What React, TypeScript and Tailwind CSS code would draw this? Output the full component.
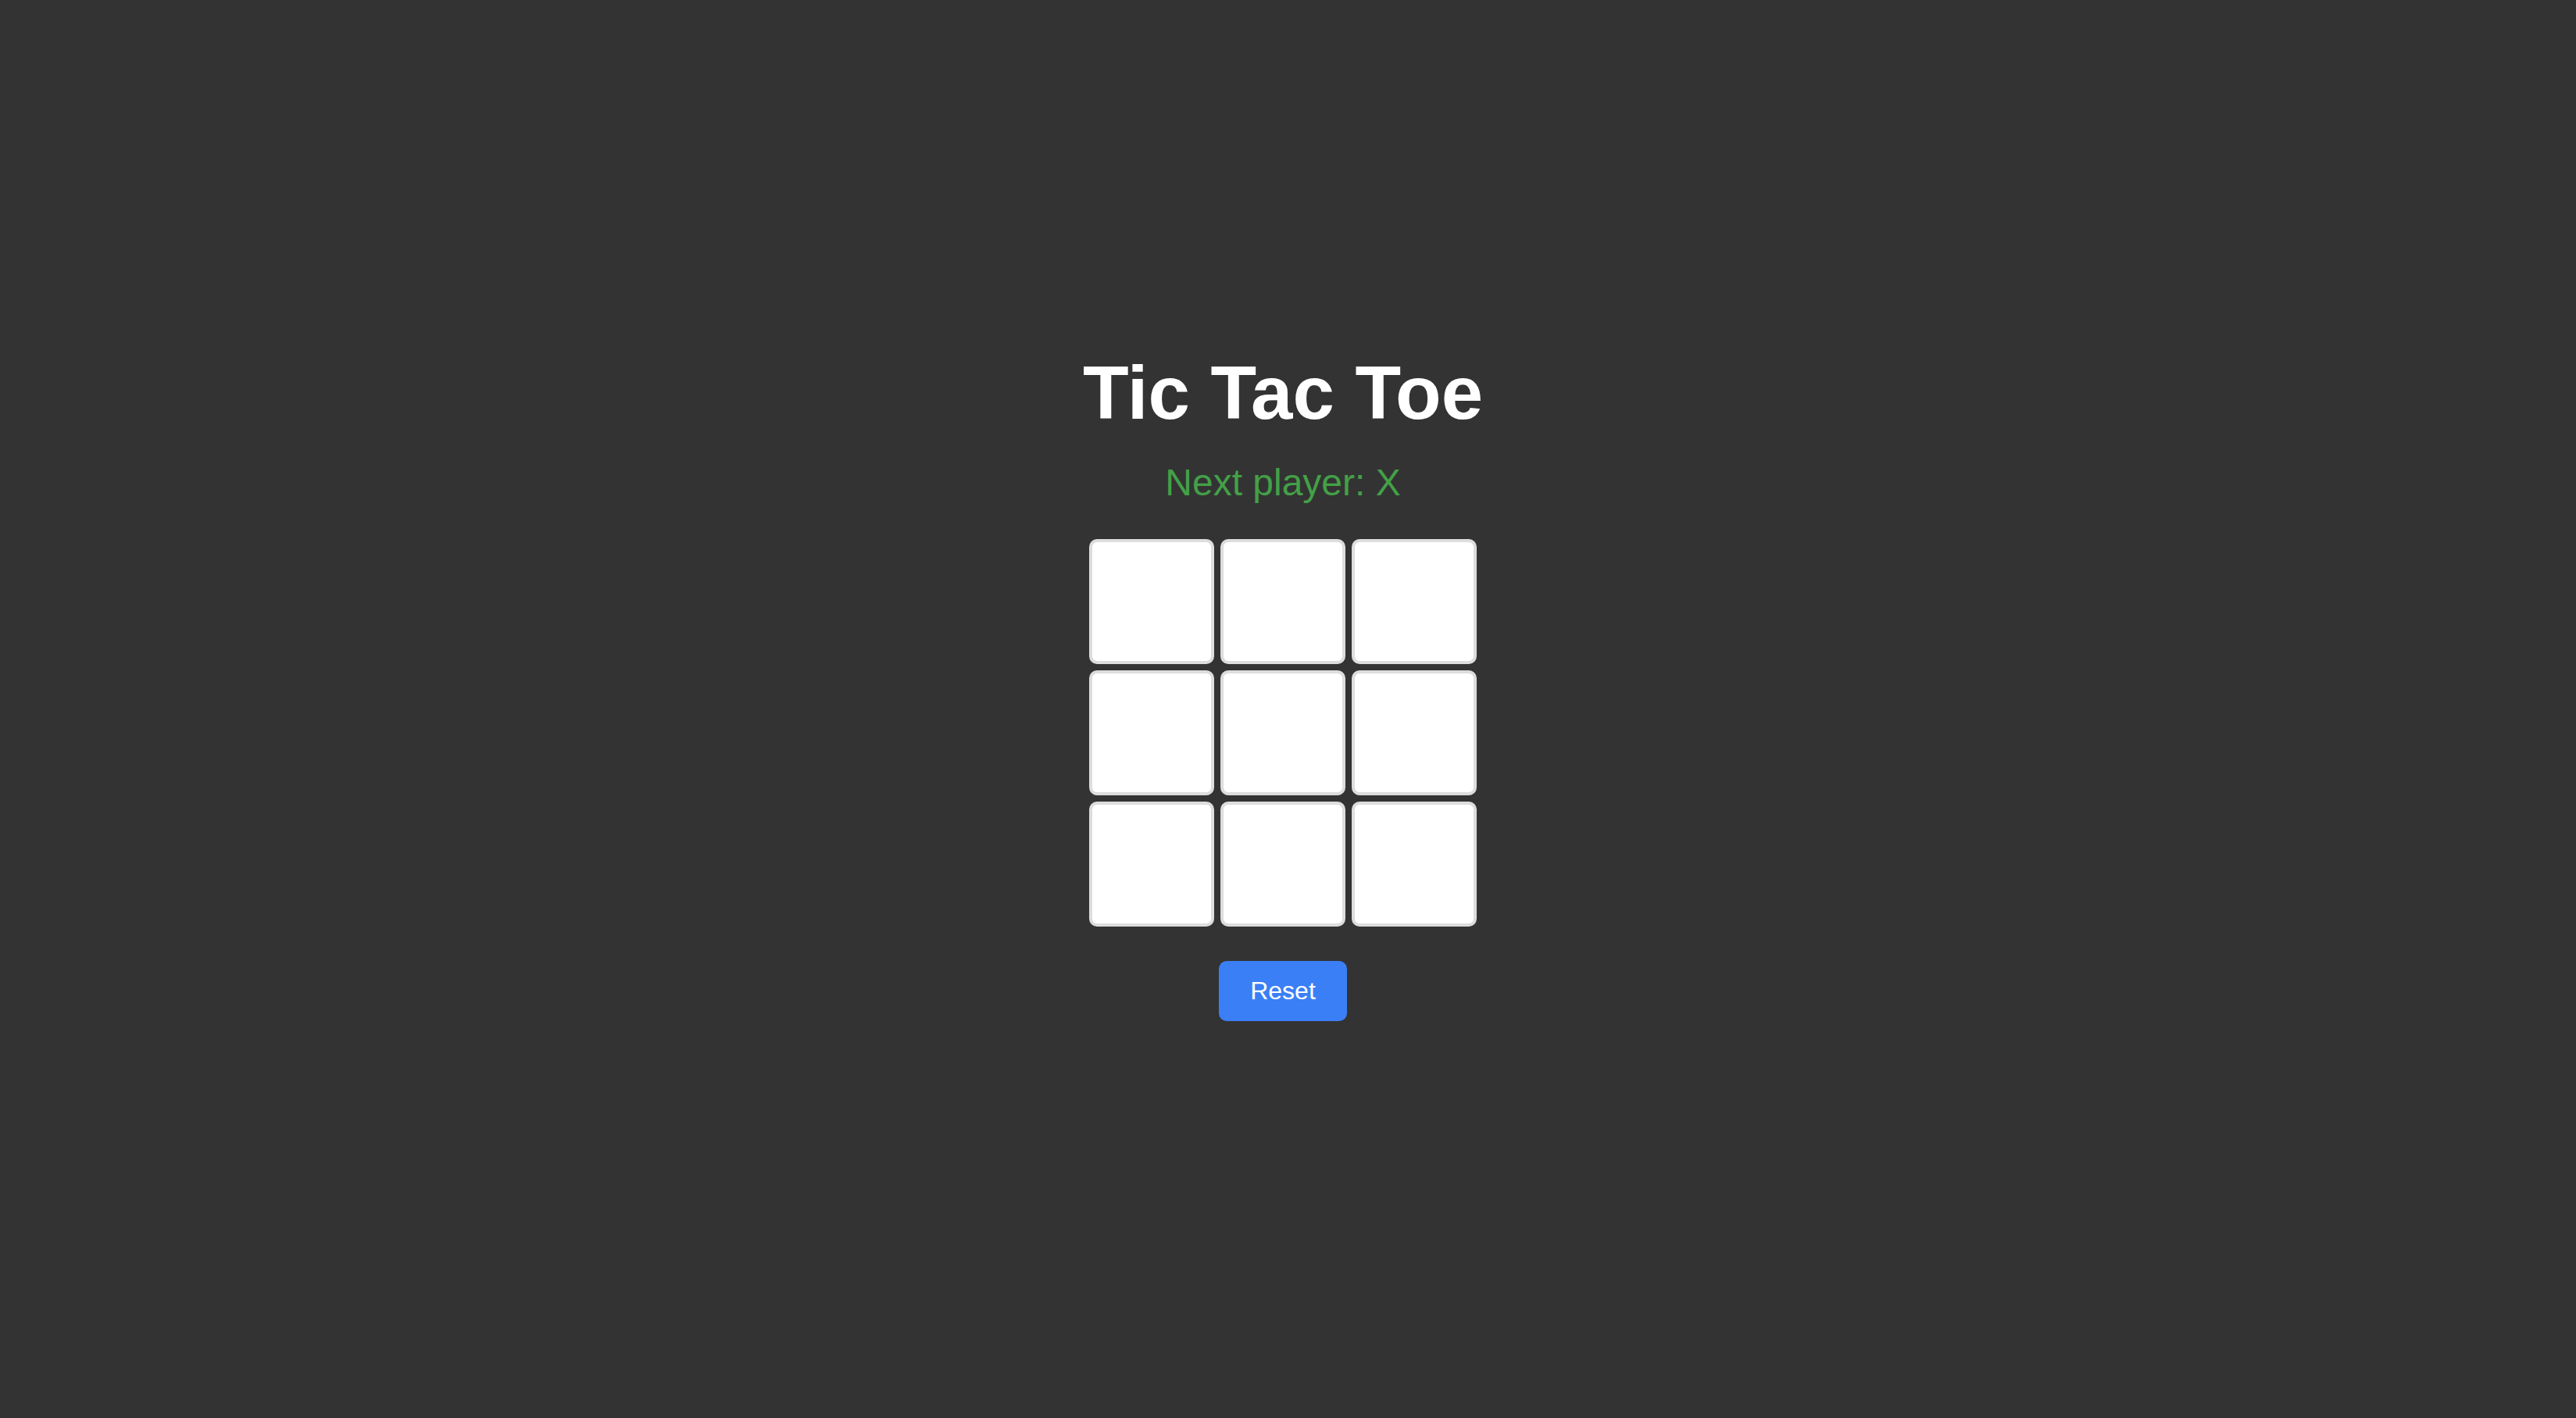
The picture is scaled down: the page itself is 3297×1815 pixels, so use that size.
import React, { useState } from "react";

export default function App() {
  const [board, setBoard] = useState<(string | null)[]>(Array(9).fill(null));
  const [xNext, setXNext] = useState(true);

  const click = (i: number) => {
    if (board[i]) return;
    const b = board.slice();
    b[i] = xNext ? "X" : "O";
    setBoard(b);
    setXNext(!xNext);
  };

  return (
    <div
      className="min-h-screen w-full bg-[#333333] flex flex-col items-center pt-[455px] pr-[13px]"
      style={{ fontFamily: '"Liberation Sans", Arial, sans-serif' }}
    >
      <h1 className="text-[96px] leading-none font-bold text-white">
        Tic Tac Toe
      </h1>
      <div className="mt-[43px] text-[48px] leading-none text-[#43a047]">
        Next player: {xNext ? "X" : "O"}
      </div>
      <div className="mt-[48px] grid grid-cols-[160px_160px_160px] grid-rows-[160px_160px_160px] gap-[8px]">
        {board.map((v, i) => (
          <button
            key={i}
            onClick={() => click(i)}
            className="w-[160px] h-[160px] bg-white border-[4px] border-[#dddddd] rounded-[10px] text-[80px] font-bold text-[#333]"
          >
            {v}
          </button>
        ))}
      </div>
      <button
        onClick={() => {
          setBoard(Array(9).fill(null));
          setXNext(true);
        }}
        className="mt-[44px] bg-[#3b7ff6] text-white text-[32px] leading-[37px] px-[40px] py-[20px] rounded-[10px]"
      >
        Reset
      </button>
    </div>
  );
}
